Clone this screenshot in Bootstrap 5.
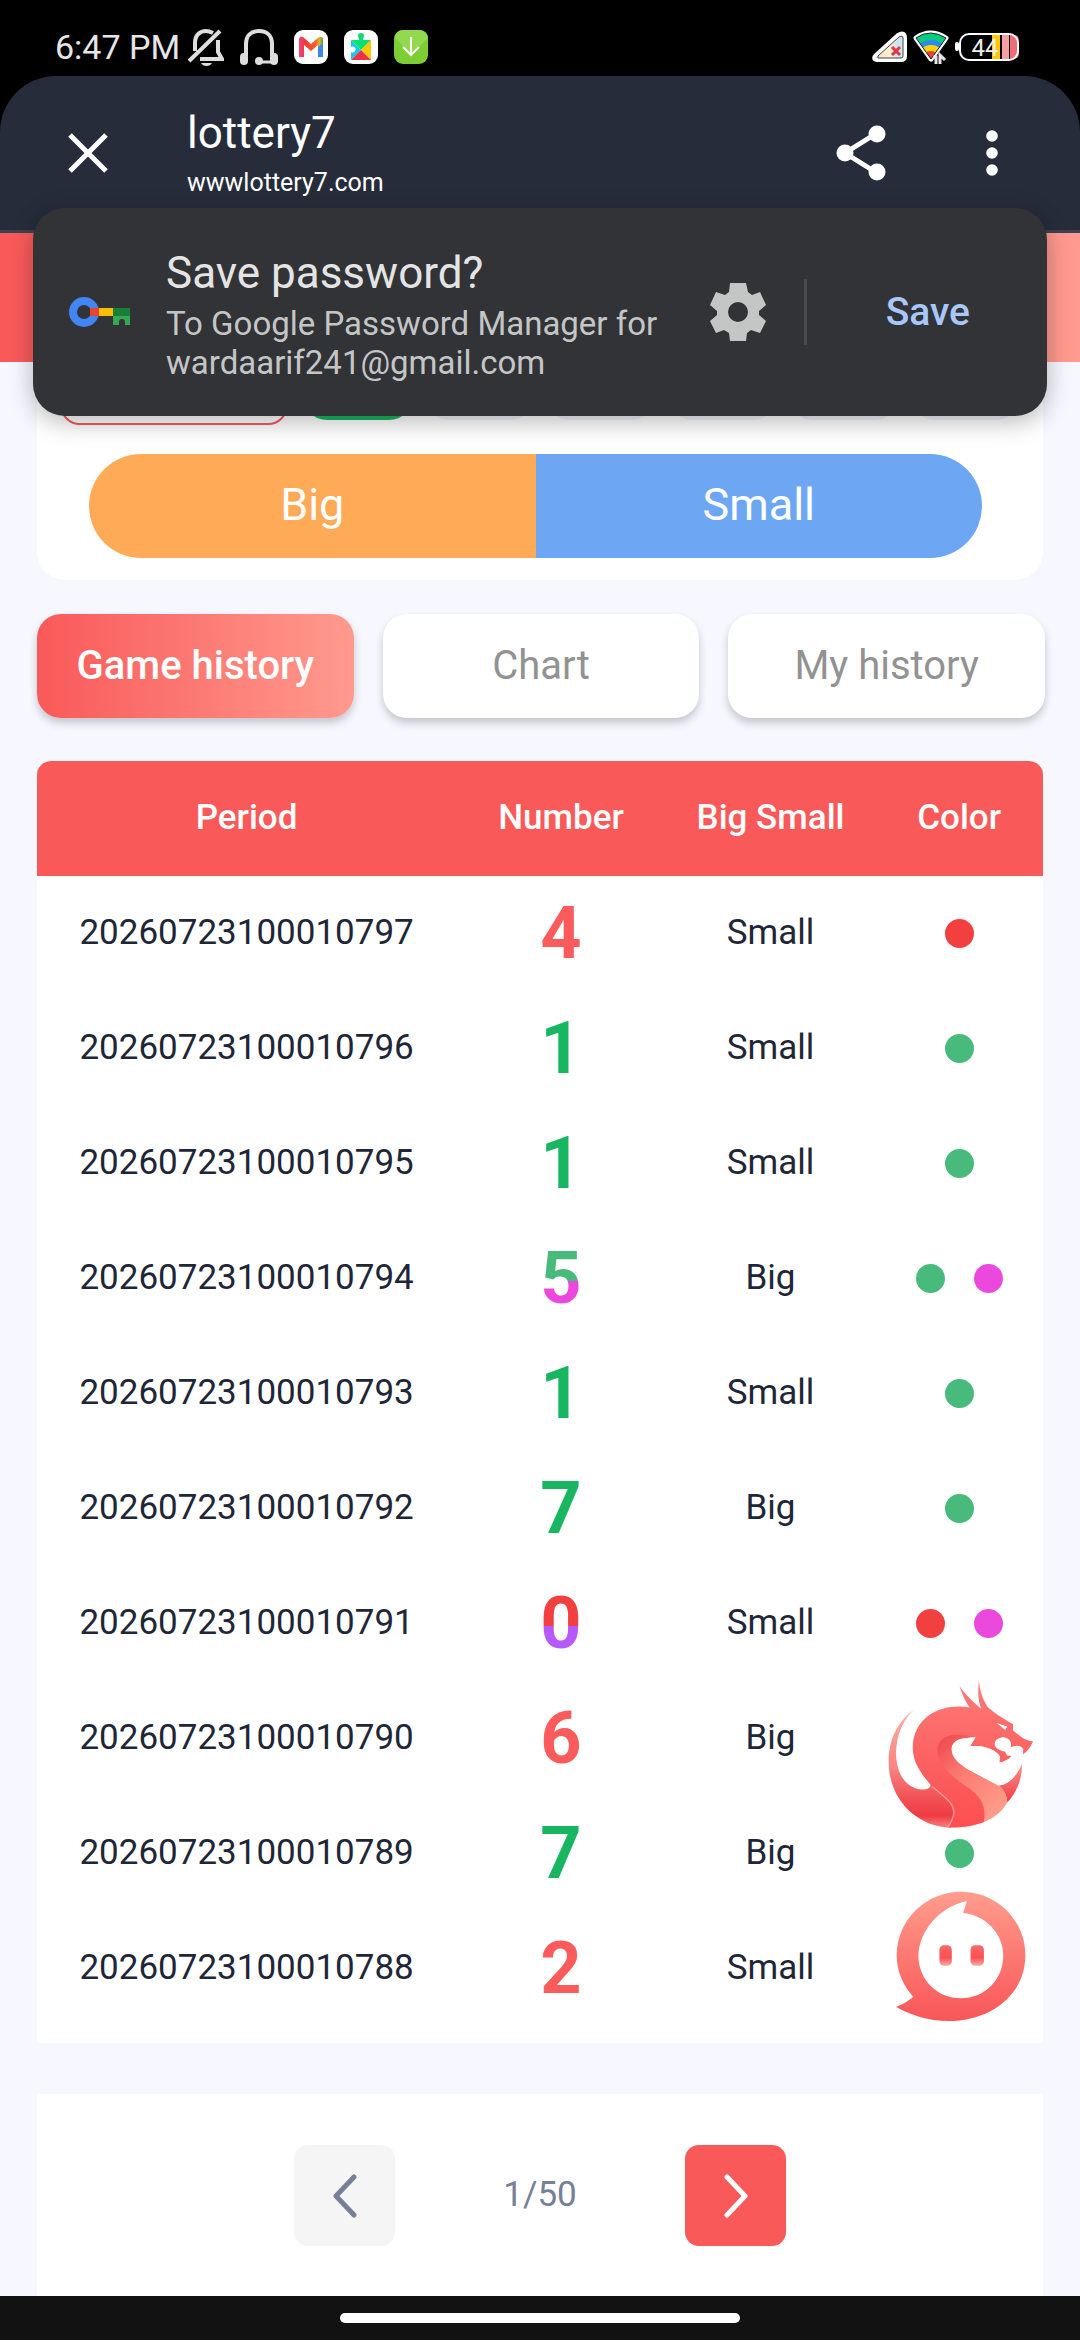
<!DOCTYPE html>
<html lang="en">
<head>
<meta charset="utf-8">
<meta name="viewport" content="width=device-width, initial-scale=1">
<title>lottery7</title>
<link rel="stylesheet" href="https://cdn.jsdelivr.net/npm/bootstrap@5.3.0/dist/css/bootstrap.min.css">
<style>
  :root { --brand: #f95959; --brand-soft: #ff9a8e; --page: #f6f7ff; --ink: #1e2637; }
  body { background: var(--page); font-family: Roboto, "Liberation Sans", sans-serif; color: var(--ink); }
  svg { display: block; flex: none; }
  button { border: 0; padding: 0; }

  .phone-status { background: #000; color: #e6e6e6; height: 76px; padding: 18px 60px 0 55px; font-size: 34px; }
  .status-apps { gap: 16px; }
  .status-signals { gap: 5px; }

  .tab-top { background: #000; }
  .tab-bar { background: #262c3a; height: 157px; border-radius: 56px 56px 0 0; border-bottom: 3px solid #3c4350; padding: 0 77px 0 68px; color: #fff; }
  .tab-title { font-size: 44px; line-height: 52px; }
  .tab-host { font-size: 25px; line-height: 36px; margin-top: 6px; }
  .tab-name { margin-left: 79px; padding-top: 2px; }
  .tab-tools { gap: 95px; }
  .bare { background: none; color: inherit; }

  .save-prompt { top: 132px; left: 33px; right: 33px; min-height: 208px; z-index: 5; background: #323336; border-radius: 32px; padding: 0 77px 0 36px; box-shadow: 0 6px 24px rgba(0,0,0,.28); }
  .prompt-copy { margin-left: 36px; padding-top: 3px; }
  .prompt-title { color: #e4e4e4; font-size: 44px; line-height: 56px; }
  .prompt-text { color: #c4c6c6; font-size: 33px; line-height: 39px; margin-top: 3px; }
  .prompt-rule { width: 3px; height: 66px; background: #4a4b4e; margin: 0 79px 0 38px; }
  .prompt-save { font-size: 39px; line-height: 50px; font-weight: 500; color: #a8c7fa; }

  .hero { height: 129px; background: linear-gradient(90deg, var(--brand), var(--brand-soft)); }
  .shell { padding: 0 37px; }
  .bet-panel { background: #fff; border-radius: 0 0 28px 28px; padding: 0 23px 22px; }
  .bet-chips { gap: 12px; margin-bottom: 29px; }
  .chip-random { width: 228px; height: 63px; margin-right: 3px; border: 2px solid var(--brand); border-radius: 20px; background: #fff; }
  .chip-times { height: 53px; border-radius: 24px; background: #f1f1fa; }
  .chip-on { background: #18b660; }
  .bet-size { margin: 0 38px 0 29px; }
  .bet-size button { height: 104px; padding-bottom: 2px; font-size: 45px; color: #fff; }
  .bet-big { background: #ffaa57; border-radius: 52px 0 0 52px; }
  .bet-small { background: #6da7f4; border-radius: 0 52px 52px 0; }

  .tab-row { gap: 29px; margin: 34px -2px 43px 0; }
  .tab-row button { height: 104px; border-radius: 24px; background: #fff; color: #929292; font-size: 40px; box-shadow: 0 5px 8px rgba(0,0,0,.2); }
  .tab-row .tab-on { background: linear-gradient(90deg, var(--brand), var(--brand-soft)); color: #fff; font-weight: 500; }

  .history { background: #fff; border-radius: 14px 14px 0 0; padding-bottom: 17px; }
  .history table { table-layout: fixed; font-size: 35px; text-align: center; }
  .history th, .history td { height: 115px; padding: 0; vertical-align: middle; }
  .history th { background: var(--brand); color: #fff; font-weight: 500; }
  .history th:first-child { border-top-left-radius: 14px; }
  .history th:last-child { border-top-right-radius: 14px; }
  .history td { color: var(--ink); }
  .c-period { width: 41.67%; }
  .c-mid { width: 20.83%; }
  .num { display: inline-block; font-size: 72px; line-height: 86px; font-weight: 700; }
  .n-red { color: #fb5b5b; }
  .n-green { color: #18b660; }
  .n-five, .n-zero { -webkit-background-clip: text; background-clip: text; color: transparent; }
  .n-five { background-image: linear-gradient(#47ba7c 52%, #eb49dd 52%); }
  .n-zero { background-image: linear-gradient(#f23f40 52%, #b659fe 52%); }
  .dots { gap: 29px; }
  .dot { width: 29px; height: 29px; border-radius: 50%; }
  .d-r { background: #f23f40; }
  .d-g { background: #47ba7c; }
  .d-v { background: #eb49dd; }
  .floaters { right: 9px; bottom: 21px; gap: 60px; }

  .pager { background: #fff; margin-top: 51px; padding: 51px 0 50px; font-size: 35px; color: #768096; }
  .pager button { width: 101px; height: 101px; border-radius: 14px; }
  .pager-count { width: 290px; text-align: center; }
  .pg-prev { background: #f5f5f5; color: #768096; }
  .pg-next { background: var(--brand); color: #fff; }

  .gesture { background: #121212; height: 44px; }
  .gesture span { width: 37%; height: 10px; border-radius: 5px; background: #fff; }
</style>
</head>
<body class="d-flex flex-column min-vh-100">

<div class="phone-status d-flex align-items-center justify-content-between">
  <div class="d-flex align-items-center">
    <span class="me-2">6:47 PM</span>
    <div class="status-apps d-flex align-items-center">
      <svg width="36" height="38" viewBox="0 0 36 38" fill="none" stroke="#dedede" stroke-width="4" aria-hidden="true">
        <path d="M7 23V15C7 7 12 3 18 3c3 0 5 1 7 2"/><path d="M1 33 32 3"/><path d="M30 12v12l4 7H12"/><path d="M13 35h11c-2 4-9 4-11 0z" fill="#dedede" stroke="none"/>
      </svg>
      <svg width="38" height="36" viewBox="0 0 38 36" aria-hidden="true">
        <path d="M6 27V15C6 7 11 2 19 2s13 5 13 13v12" fill="none" stroke="#dedede" stroke-width="4"/><rect x="0" y="24" width="8" height="12" rx="4" fill="#dedede"/><rect x="30" y="24" width="8" height="12" rx="4" fill="#dedede"/><circle cx="19" cy="32" r="4" fill="#dedede"/><path d="M19 33h14" stroke="#dedede" stroke-width="3"/>
      </svg>
      <svg width="34" height="34" viewBox="0 0 34 34" aria-hidden="true">
        <defs><linearGradient id="gm"><stop offset="0" stop-color="#f43f8d"/><stop offset=".25" stop-color="#ee3b35"/><stop offset=".7" stop-color="#f3622c"/><stop offset=".85" stop-color="#e8b51c"/><stop offset="1" stop-color="#3aa655"/></linearGradient></defs>
        <rect width="34" height="34" rx="9" fill="#fff"/>
        <path d="M5 27V10q0-4 4-3l8 7 8-7q4-1 4 3v17h-5V15l-7 6-7-6v12z" fill="url(#gm)"/><path d="M24 17l5-4v14h-5z" fill="#3b86f0"/>
      </svg>
      <svg width="34" height="34" viewBox="0 0 34 34" aria-hidden="true">
        <rect width="34" height="34" rx="9" fill="#fff"/><circle cx="17" cy="6" r="3" fill="#16d573"/><path d="M15 6h4v6h-4z" fill="#16d573"/>
        <path d="M7 10l10 10L7 30v-8a3 3 0 1 0 0-5z" fill="#16c8ee"/><path d="M7 10h20L17 20z" fill="#08e070"/><path d="M27 10v20L17 20z" fill="#fdc902"/><path d="M7 30h20L17 20z" fill="#ee3348"/>
      </svg>
      <svg width="34" height="34" viewBox="0 0 34 34" aria-hidden="true">
        <rect width="34" height="34" rx="9" fill="#7dce34"/><path d="M1 8q1-8 8-8h16q8 0 9 8L17 24z" fill="#93d94f"/><path d="M17 7v18M9 17l8 8 8-8" fill="none" stroke="#fff" stroke-width="2"/>
      </svg>
    </div>
  </div>
  <div class="status-signals d-flex align-items-center">
    <svg width="36" height="32" viewBox="0 0 36 32" aria-hidden="true">
      <defs><linearGradient id="sg"><stop offset="0" stop-color="#ffd9c4"/><stop offset=".5" stop-color="#fff3cc"/><stop offset=".75" stop-color="#cfe0fb"/><stop offset="1" stop-color="#c8f2d6"/></linearGradient></defs>
      <path d="M4 24 26 4q7-4 7 3v18q0 4-4 4H5q-5-1-1-5z" fill="url(#sg)" stroke="#fff" stroke-width="4" stroke-linejoin="round"/><path d="M6 25 27 6q4-2 4 1v18q0 2-2 2H6z" fill="none" stroke="#444"/>
      <path d="m20 16 8 8m0-8-8 8" stroke="#e5343c" stroke-width="3"/>
    </svg>
    <svg width="37" height="34" viewBox="0 0 37 34" aria-hidden="true">
      <defs><clipPath id="wf"><path d="M3 8q14-10 30 0L18 29z"/></clipPath></defs>
      <path d="M3 8q14-10 30 0L18 29z" fill="#e94035" stroke="#fff" stroke-width="5" stroke-linejoin="round"/>
      <g clip-path="url(#wf)"><circle cx="18" cy="29" r="28" fill="#0bcb7c"/><circle cx="18" cy="29" r="19" fill="#3087f4"/><circle cx="18" cy="29" r="14" fill="#ffd400"/><circle cx="18" cy="29" r="8" fill="#ea4335"/></g>
      <path d="M3 8q14-10 30 0L18 29z" fill="none" stroke="#222"/><path d="M23 34v-7h-3M27 34v-9l5 5" fill="none" stroke="#e8e8e8" stroke-width="3"/>
    </svg>
    <svg width="65" height="30" viewBox="0 0 65 30" aria-hidden="true">
      <rect x="0" y="10" width="4" height="9" rx="2" fill="#fff"/><path d="M37 3h8v24h-8z" fill="#ffc800"/><path d="M47 3h7v24h-7z" fill="#f4a0a6"/><path d="M55 3h4q5 0 5 7v10q0 7-5 7h-4z" fill="#ee6c78"/>
      <rect x="5" y="2" width="58" height="26" rx="9" fill="none" stroke="#fff" stroke-width="2"/>
      <text x="30" y="24" text-anchor="middle" font-family="Roboto" font-size="24" fill="#eee">44</text>
    </svg>
  </div>
</div>

<header class="tab-top position-relative">
  <div class="tab-bar d-flex align-items-center">
    <button class="bare" aria-label="Close tab"><svg width="40" height="40" viewBox="0 0 40 40" stroke="#fff" stroke-width="5"><path d="m2 2 36 36M38 2 2 38"/></svg></button>
    <div class="tab-name flex-grow-1">
      <div class="tab-title">lottery7</div>
      <div class="tab-host">wwwlottery7.com</div>
    </div>
    <div class="tab-tools d-flex align-items-center">
      <button class="bare" aria-label="Share"><svg width="50" height="56" viewBox="0 0 50 56" fill="#fff"><path d="M41 8 9 28l32 20" fill="none" stroke="#fff" stroke-width="5"/><circle cx="41" cy="9" r="8.5"/><circle cx="9" cy="28" r="8.5"/><circle cx="41" cy="47" r="8.5"/></svg></button>
      <button class="bare" aria-label="More"><svg width="22" height="46" viewBox="0 0 22 46" fill="#fff"><circle cx="11" cy="6" r="5.8"/><circle cx="11" cy="23" r="5.8"/><circle cx="11" cy="40" r="5.8"/></svg></button>
    </div>
  </div>

  <section class="save-prompt position-absolute d-flex align-items-center" role="dialog" aria-label="Save password">
    <svg width="61" height="32" viewBox="0 0 61 32" aria-hidden="true">
      <circle cx="15" cy="16" r="11" fill="none" stroke="#4285f4" stroke-width="8"/><path d="M21 12h9v8h-9z" fill="#ea4335"/><path d="M30 12h14v8H30z" fill="#fbbc04"/><path d="M44 12h17v8H44z" fill="#188038"/><path d="M44 20h17v9h-5v-3a3 3 0 0 0-6 0v3h-6z" fill="#34a853"/>
    </svg>
    <div class="prompt-copy flex-grow-1">
      <div class="prompt-title">Save password?</div>
      <div class="prompt-text">To Google Password Manager for<br>wardaarif241@gmail.com</div>
    </div>
    <button class="bare" aria-label="Password settings"><svg width="56" height="58" viewBox="0 0 56 58" fill="#c4c6c6"><path fill-rule="evenodd" d="M20 0h16l2 9 4 3 8-3 6 13-7 6v4l7 6-6 12-9-3-4 3-1 8H20l-1-8-5-3-8 3-6-12 7-6v-4l-7-6L6 9l9 3 4-3zM28 19a10 10 0 1 0 0 20 10 10 0 0 0 0-20z"/></svg></button>
    <div class="prompt-rule"></div>
    <button class="bare prompt-save">Save</button>
  </section>
</header>

<div class="hero"></div>

<main class="shell flex-grow-1">
  <section class="bet-panel">
    <div class="bet-chips d-flex align-items-center">
      <button class="chip-random" aria-label="Random"></button>
      <button class="chip-times chip-on flex-fill" aria-label="X1"></button>
      <button class="chip-times flex-fill" aria-label="X5"></button>
      <button class="chip-times flex-fill" aria-label="X10"></button>
      <button class="chip-times flex-fill" aria-label="X20"></button>
      <button class="chip-times flex-fill" aria-label="X50"></button>
      <button class="chip-times flex-fill" aria-label="X100"></button>
    </div>
    <div class="bet-size d-flex">
      <button class="bet-big w-50">Big</button>
      <button class="bet-small w-50">Small</button>
    </div>
  </section>

  <div class="tab-row d-flex">
    <button class="tab-on w-100">Game history</button>
    <button class="w-100">Chart</button>
    <button class="w-100">My history</button>
  </div>

  <section class="history position-relative">
    <table class="w-100">
      <thead><tr><th class="c-period" scope="col">Period</th><th class="c-mid" scope="col">Number</th><th class="c-mid" scope="col">Big Small</th><th scope="col">Color</th></tr></thead>
      <tbody>
        <tr><td>20260723100010797</td><td><span class="num n-red">4</span></td><td>Small</td><td><div class="dots d-flex justify-content-center"><span class="dot d-r"></span></div></td></tr>
        <tr><td>20260723100010796</td><td><span class="num n-green">1</span></td><td>Small</td><td><div class="dots d-flex justify-content-center"><span class="dot d-g"></span></div></td></tr>
        <tr><td>20260723100010795</td><td><span class="num n-green">1</span></td><td>Small</td><td><div class="dots d-flex justify-content-center"><span class="dot d-g"></span></div></td></tr>
        <tr><td>20260723100010794</td><td><span class="num n-five">5</span></td><td>Big</td><td><div class="dots d-flex justify-content-center"><span class="dot d-g"></span><span class="dot d-v"></span></div></td></tr>
        <tr><td>20260723100010793</td><td><span class="num n-green">1</span></td><td>Small</td><td><div class="dots d-flex justify-content-center"><span class="dot d-g"></span></div></td></tr>
        <tr><td>20260723100010792</td><td><span class="num n-green">7</span></td><td>Big</td><td><div class="dots d-flex justify-content-center"><span class="dot d-g"></span></div></td></tr>
        <tr><td>20260723100010791</td><td><span class="num n-zero">0</span></td><td>Small</td><td><div class="dots d-flex justify-content-center"><span class="dot d-r"></span><span class="dot d-v"></span></div></td></tr>
        <tr><td>20260723100010790</td><td><span class="num n-red">6</span></td><td>Big</td><td><div class="dots d-flex justify-content-center"><span class="dot d-r"></span></div></td></tr>
        <tr><td>20260723100010789</td><td><span class="num n-green">7</span></td><td>Big</td><td><div class="dots d-flex justify-content-center"><span class="dot d-g"></span></div></td></tr>
        <tr><td>20260723100010788</td><td><span class="num n-red">2</span></td><td>Small</td><td><div class="dots d-flex justify-content-center"><span class="dot d-r"></span></div></td></tr>
      </tbody>
    </table>

    <div class="floaters position-absolute d-flex flex-column align-items-center">
      <button class="bare" aria-label="Dragon bonus">
        <svg width="147" height="152" viewBox="80 55 440 455">
          <defs>
            <linearGradient id="dBody" x1="0" y1="0" x2="0" y2="1"><stop offset="0" stop-color="#ff7b76"/><stop offset=".6" stop-color="#fb5f5f"/><stop offset="1" stop-color="#ff4e50"/></linearGradient>
            <linearGradient id="dTail" x1="0" y1="0" x2="0" y2="1"><stop offset="0" stop-color="#ffb1a8"/><stop offset=".5" stop-color="#f98380"/><stop offset=".72" stop-color="#f2575b"/><stop offset=".9" stop-color="#ef3b43"/><stop offset="1" stop-color="#fa8080"/></linearGradient>
            <linearGradient id="dBelly" x1="0" y1="0" x2=".7" y2="1"><stop offset="0" stop-color="#ee444b"/><stop offset=".45" stop-color="#fb7a70"/><stop offset="1" stop-color="#ff9c8a"/></linearGradient>
            <linearGradient id="dFin" x1="0" y1="0" x2="0" y2="1"><stop offset="0" stop-color="#ff928c"/><stop offset="1" stop-color="#ee3b43"/></linearGradient>
          </defs>
          <circle cx="288" cy="302" r="190" fill="#fff"/>
          <path d="M165 147C110 185 85 240 85 305C85 420 170 500 270 503C285 480 290 445 262 415L210 372C212 385 200 389 185 389C135 385 108 340 107 280C108 225 130 175 165 147Z" fill="url(#dTail)"/>
          <path d="M413 377C445 375 470 345 484 312C485 355 470 395 440 428C438 405 430 390 413 377Z" fill="url(#dFin)"/>
          <path d="M327 143C250 130 158 165 157 265C158 310 185 345 215 380C250 410 277 425 280 455C280 475 270 490 262 502C300 505 340 498 370 487L385 420L240 300L260 230L345 232L328 259C370 255 405 268 418 290L416 308C432 306 445 300 453 288L440 288L433 275C415 272 403 263 402 253C404 238 415 232 430 232C448 235 455 250 450 262C465 255 485 255 488 270L487 283C500 275 510 262 517 244C505 244 495 240 480 230L457 212V193C425 175 395 155 380 140C362 110 358 90 355 62C352 100 352 120 362 147C335 125 315 105 297 80C305 105 315 125 327 143Z" fill="url(#dBody)"/>
          <path d="M345 232C260 210 231 240 231 275C232 310 270 345 300 368C350 400 380 425 370 487C400 475 425 455 440 428C440 405 430 390 413 377C385 360 330 335 310 320C280 300 270 280 275 258C285 235 310 235 345 232Z" fill="url(#dBelly)"/>
          <path d="M345 232C310 235 285 235 275 258C270 280 280 300 310 320C330 335 385 360 413 377C445 375 470 345 484 312L453 288C445 300 432 306 416 308L418 290C405 268 370 255 328 259Z" fill="#fff"/>
          <path d="M215 380C250 410 277 425 280 455C280 475 270 490 262 502" fill="none" stroke="#ff9d98" stroke-width="4"/>
          <path d="M408 190 440 200 434 211Z" fill="#fff"/>
        </svg>
      </button>
      <button class="bare" aria-label="Customer service">
        <svg width="132" height="132" viewBox="105 690 395 395">
          <defs>
            <linearGradient id="cRing" x1="0" y1="0" x2="0" y2="1"><stop offset="0" stop-color="#ff9d8e"/><stop offset="1" stop-color="#f95557"/></linearGradient>
            <linearGradient id="cEye" x1="0" y1="0" x2="0" y2="1"><stop offset="0" stop-color="#f96a6a"/><stop offset=".6" stop-color="#fb5052"/><stop offset="1" stop-color="#ffaaa8"/></linearGradient>
          </defs>
          <path d="M303 695C410 695 495 780 495 885C495 1005 390 1082 265 1082C205 1082 155 1065 108 1040Q138 1028 160 1010C130 975 110 935 110 885C112 775 200 695 303 695Z" fill="url(#cRing)"/>
          <path d="M320 723L309 759C375 765 429 820 429 886C429 957 375 1014 302 1014C230 1014 175 957 175 886C178 810 240 740 320 723Z" fill="#fff"/>
          <rect x="238" y="855" width="37" height="62" rx="14" fill="url(#cEye)"/><rect x="331" y="855" width="40" height="62" rx="14" fill="url(#cEye)"/>
        </svg>
      </button>
    </div>
  </section>

  <nav class="pager d-flex align-items-center justify-content-center" aria-label="History pages">
    <button class="pg-prev d-flex align-items-center justify-content-center" aria-label="Previous page"><svg width="26" height="44" viewBox="0 0 26 44" fill="none" stroke="currentColor" stroke-width="5" stroke-linecap="round" stroke-linejoin="round"><path d="M22 3 4 22l18 19"/></svg></button>
    <span class="pager-count">1/50</span>
    <button class="pg-next d-flex align-items-center justify-content-center" aria-label="Next page"><svg width="26" height="44" viewBox="0 0 26 44" fill="none" stroke="currentColor" stroke-width="5" stroke-linecap="round" stroke-linejoin="round"><path d="m4 3 18 19L4 41"/></svg></button>
  </nav>
</main>

<footer class="gesture d-flex align-items-center justify-content-center"><span></span></footer>

<script src="https://cdn.jsdelivr.net/npm/bootstrap@5.3.0/dist/js/bootstrap.bundle.min.js"></script>
</body>
</html>
